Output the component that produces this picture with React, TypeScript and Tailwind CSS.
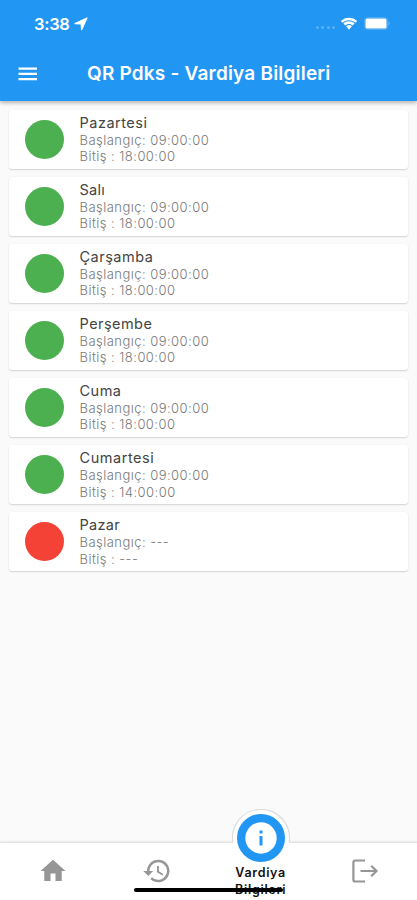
import React from "react";

type Shift = { day: string; start: string; end: string; active: boolean; tracking: string };

const shifts: Shift[] = [
  { day: "Pazartesi", start: "09:00:00", end: "18:00:00", active: true, tracking: "tracking-[0.5px]" },
  { day: "Salı", start: "09:00:00", end: "18:00:00", active: true, tracking: "tracking-[0.3px]" },
  { day: "Çarşamba", start: "09:00:00", end: "18:00:00", active: true, tracking: "tracking-[0.5px]" },
  { day: "Perşembe", start: "09:00:00", end: "18:00:00", active: true, tracking: "tracking-[0.45px]" },
  { day: "Cuma", start: "09:00:00", end: "18:00:00", active: true, tracking: "tracking-[0.5px]" },
  { day: "Cumartesi", start: "09:00:00", end: "14:00:00", active: true, tracking: "tracking-[0.55px]" },
  { day: "Pazar", start: "---", end: "---", active: false, tracking: "tracking-[0.3px]" },
];

function StatusBar() {
  return (
    <div className="flex h-[47px] items-center pl-[34px] pr-[27px]">
      <span className="text-[16.5px] font-semibold leading-5 tracking-[-0.3px]">3:38</span>
      <svg className="ml-[4.5px]" width="14" height="14" viewBox="0 0 14 14" fill="currentColor">
        <path d="M13 1 7.600 12.700 7.200 6.900 1 6.600z" stroke="currentColor" strokeWidth="1.200" strokeLinejoin="round" />
      </svg>
      <div className="ml-auto mt-2 flex gap-[2.5px]">
        {[0, 1, 2, 3].map((i) => (
          <span key={i} className="h-[3px] w-[3px] rounded-full bg-white/25" />
        ))}
      </div>
      <svg className="ml-[5px]" width="18" height="14" viewBox="0 0 18 14" fill="currentColor">
        <path d="M9 .8C5.800.8 3 2 .8 4.100L2.500 5.800C4.300 4.100 6.500 3.200 9 3.200s4.700.9 6.500 2.600l1.700-1.700C15 2 12.200.8 9 .8z" />
        <path d="M9 4.300c-2.100 0-4.100.8-5.600 2.300L5.200 8.400C6.200 7.500 7.500 6.900 9 6.900s2.800.6 3.800 1.500l1.800-1.800C13.100 5.100 11.100 4.300 9 4.300z" />
        <path d="M9 8.100c-1.100 0-2.100.4-2.900 1.200L9 12.800l2.900-3.500C11.100 8.500 10.100 8.100 9 8.100z" />
      </svg>
      <svg className="ml-[6px]" width="26" height="13" viewBox="0 0 26 13">
        <rect x=".5" y=".5" width="23" height="12" rx="3" fill="none" stroke="#fff" strokeOpacity=".2" />
        <rect x="1.500" y="1.500" width="21" height="10" rx="1.500" fill="#fff" />
        <path d="M24.500 4.500c1.500.8 1.500 3.200 0 4z" fill="#fff" fillOpacity=".4" />
      </svg>
    </div>
  );
}

function ShiftCard({ shift }: { shift: Shift }) {
  return (
    <li className="flex h-[59.1px] items-center rounded-[3px] bg-white pl-[15.5px] shadow-[0_1px_1.5px_rgba(0,0,0,0.15),0_0_2px_rgba(0,0,0,0.03)]">
      <span className={`h-[39px] w-[39px] shrink-0 rounded-full ${shift.active ? "bg-[#4caf50]" : "bg-[#f44336]"}`} />
      <div className="ml-4 whitespace-nowrap">
        <div className={`text-[14.5px] leading-[18px] text-[#444] ${shift.tracking}`}>{shift.day}</div>
        <div className="text-[13px] font-light leading-[16.5px] tracking-[0.46px] text-[#777]">Başlangıç: {shift.start}</div>
        <div className="text-[13px] font-light leading-[16.5px] tracking-[0.46px] text-[#777]">Bitiş : {shift.end}</div>
      </div>
    </li>
  );
}

function BottomBar() {
  return (
    <nav className="relative h-[58px] border-t border-[#e2e2e2] bg-white shadow-[0_-1px_2px_rgba(0,0,0,0.06)]">
      <div className="grid h-full grid-cols-4 text-[#969696]">
        <div className="flex justify-center pl-px pt-[13px]">
          <svg width="30" height="30" viewBox="0 0 24 24" fill="currentColor">
            <path d="M10 20v-6h4v6h5v-8h3L12 3 2 12h3v8z" />
          </svg>
        </div>
        <div className="flex justify-center pl-px pt-[13px]">
          <svg width="30" height="30" viewBox="0 0 24 24" fill="currentColor">
            <path d="M13 3a9 9 0 0 0-9 9H1l3.890 3.890.07.14L9 12H6a7 7 0 1 1 2.060 4.940l-1.420 1.420A9 9 0 1 0 13 3zm-1 5v5l4.280 2.540.72-1.210-3.500-2.080V8z" />
          </svg>
        </div>
        <div className="relative">
          <div className="absolute -top-[34px] left-1/2 flex h-[58px] w-[58px] -translate-x-1/2 items-center justify-center">
            <svg className="absolute inset-0" width="58" height="58" viewBox="0 0 58 58">
              <circle cx="29" cy="29" r="28.500" fill="#fff" />
              <path d="M.8 33a28.500 28.500 0 1 1 56.400 0" fill="none" stroke="#ddd" strokeWidth="1.200" />
            </svg>
            <div className="relative flex h-12 w-12 items-center justify-center rounded-full bg-[#2196f3]">
              <svg width="32" height="32" viewBox="0 0 32 32">
                <circle cx="16" cy="16" r="15.700" fill="#fff" />
                <path d="M14.500 8.500h3v3h-3zM14.500 14h3v9.500h-3z" fill="#2196f3" />
              </svg>
            </div>
          </div>
          <div className="absolute left-1/2 top-[20.5px] w-[70px] -translate-x-1/2 text-center text-[12.5px] font-semibold leading-[17px] tracking-[0.7px] text-[#111]">
            Vardiya Bilgileri
          </div>
        </div>
        <div className="flex justify-center pt-[13px]">
          <svg width="30" height="30" viewBox="0 0 30 30" fill="none" stroke="currentColor" strokeWidth="2.200">
            <path d="M15 4.500H5.200Q3.400 4.500 3.400 6.300V23.700Q3.400 25.500 5.200 25.500H15M10.500 15H26.500M21.200 9.700 26.500 15l-5.300 5.300" />
          </svg>
        </div>
      </div>
      <div className="absolute left-[134px] top-[45px] h-[4px] w-[149px] rounded-full bg-black" />
    </nav>
  );
}

export default function App() {
  return (
    <div className="flex h-[900px] w-[417px] flex-col overflow-hidden bg-[#fafafa] font-['Inter','Liberation_Sans',sans-serif]">
      <header className="relative h-[101px] shrink-0 bg-[#2196f3] text-white shadow-[0_2px_4px_rgba(0,0,0,0.28)]">
        <StatusBar />
        <div className="flex h-[53px] items-center pl-[18px]">
          <svg width="20" height="14" viewBox="0 0 20 14" fill="currentColor">
            <path d="M.5.500h18.500v2.300H.5zM.5 5.800h18.500v2.300H.5zM.5 11h18.500v2.300H.5z" />
          </svg>
          <h1 className="ml-[49px] whitespace-nowrap text-[19px] font-semibold leading-6 tracking-[0.2px]">QR Pdks - Vardiya Bilgileri</h1>
        </div>
      </header>
      <main className="flex-1 px-[9px] pt-[8.5px]">
        <ul className="flex flex-col gap-2">
          {shifts.map((shift) => (
            <ShiftCard key={shift.day} shift={shift} />
          ))}
        </ul>
      </main>
      <BottomBar />
    </div>
  );
}
